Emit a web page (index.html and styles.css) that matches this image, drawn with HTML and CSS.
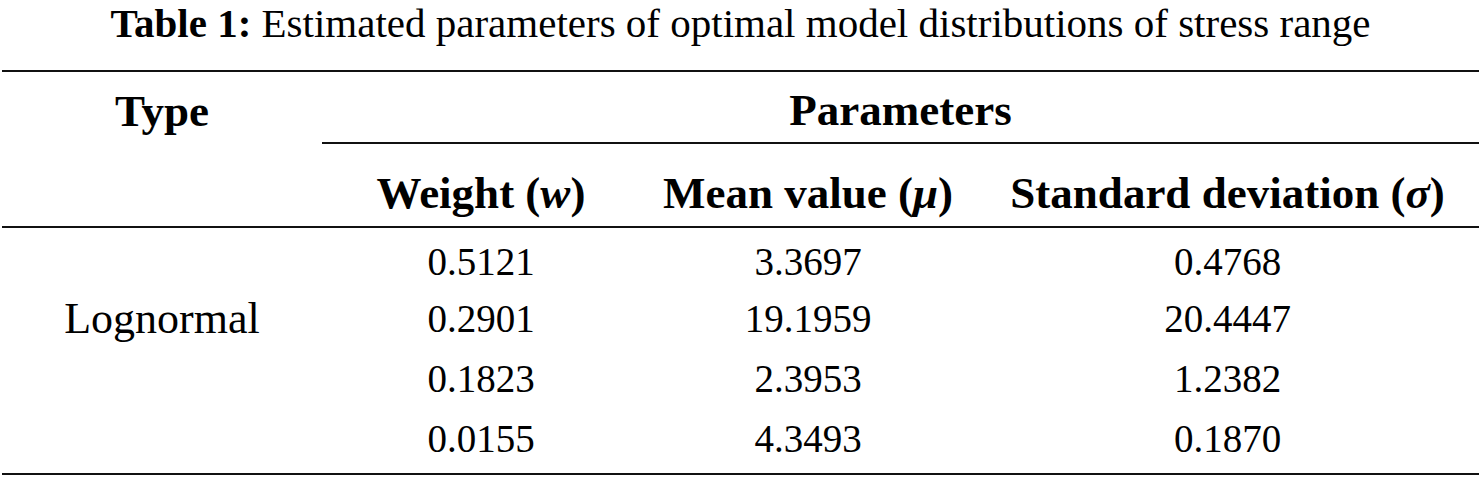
FILE: index.html
```html
<!DOCTYPE html>
<html>
<head>
<meta charset="utf-8">
<link rel="stylesheet" href="styles.css">
</head>
<body>
<div class="caption"><b>Table 1:</b> Estimated parameters of optimal model distributions of stress range</div>
<table class="tbl">
  <colgroup>
    <col class="c1"><col class="c2"><col class="c3"><col class="c4">
  </colgroup>
  <thead>
    <tr class="h1">
      <th class="type">Type</th>
      <th colspan="3" class="params">Parameters</th>
    </tr>
    <tr class="h2">
      <th></th>
      <th>Weight (<i>w</i>)</th>
      <th>Mean value (<i>μ</i>)</th>
      <th>Standard deviation (<i>σ</i>)</th>
    </tr>
  </thead>
  <tbody>
    <tr class="first"><td class="name"></td><td>0.5121</td><td>3.3697</td><td>0.4768</td></tr>
    <tr><td class="name">Lognormal</td><td>0.2901</td><td>19.1959</td><td>20.4447</td></tr>
    <tr><td class="name"></td><td>0.1823</td><td>2.3953</td><td>1.2382</td></tr>
    <tr class="last"><td class="name"></td><td>0.0155</td><td>4.3493</td><td>0.1870</td></tr>
  </tbody>
</table>
</body>
</html>
```
FILE: styles.css
```css
html, body {
  margin: 0;
  padding: 0;
  background: #fff;
  color: #000;
}
body {
  font-family: "Liberation Serif", "DejaVu Serif", serif;
  font-size: 41px;
}
.caption {
  text-align: center;
  height: 46px;
  line-height: 46px;
  margin-bottom: 24px;
}
.caption b { font-weight: bold; }
.tbl {
  margin-left: 2px;
  width: 1477px;
  border-collapse: collapse;
  table-layout: fixed;
  border-top: 2px solid #111;
  border-bottom: 2px solid #111;
}
.c1 { width: 320px; }
.c2 { width: 318px; }
.c3 { width: 336px; }
.c4 { width: 503px; }
th, td {
  padding: 0;
  text-align: center;
  line-height: 48px;
  box-sizing: border-box;
}
th { font-weight: bold; font-size: 45px; }
.h1 th { height: 72px; vertical-align: middle; padding-top: 6px; }
.h1 .params { border-bottom: 2px solid #111; }
.h2 th { height: 84px; vertical-align: middle; padding-top: 16px; border-bottom: 2px solid #111; }
tbody td { height: 60px; vertical-align: middle; font-size: 39px; }
tbody td.name { font-size: 44px; }
tbody tr.first td { height: 62px; padding-top: 6px; }
tbody tr.last td { height: 65px; padding-bottom: 5px; }
i { font-style: italic; }
```
